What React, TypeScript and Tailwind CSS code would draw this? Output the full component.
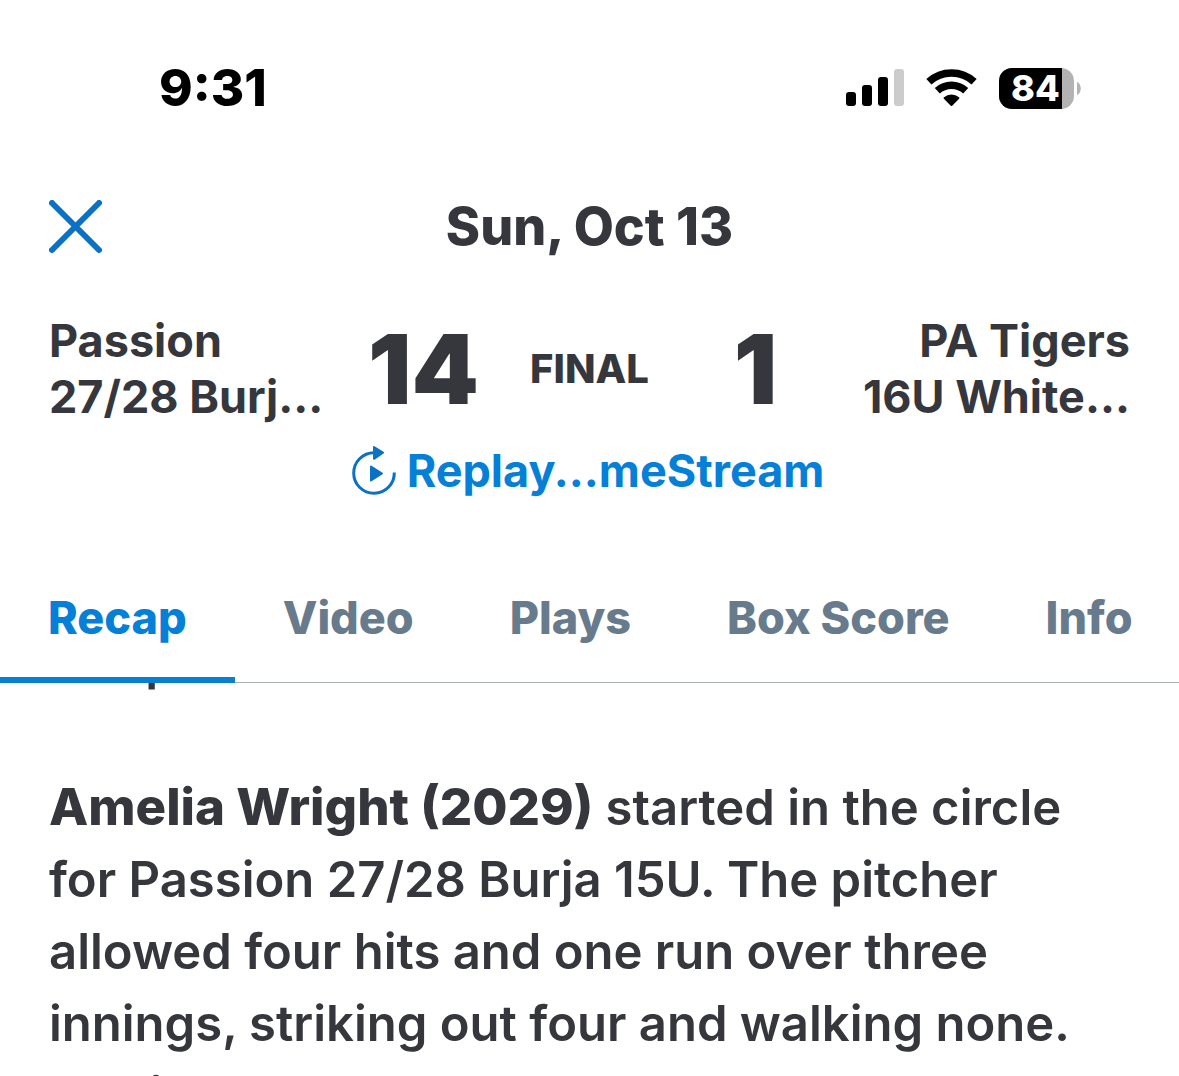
const tabs = ["Recap", "Video", "Plays", "Box Score", "Info"];

function SignalIcon() {
  return (
    <svg width="59" height="38" viewBox="0 0 59 38" fill="currentColor" aria-hidden="true">
      <rect x="1" y="23" width="10" height="14" rx="3" />
      <rect x="17" y="16" width="10" height="21" rx="3" />
      <rect x="33" y="8" width="10" height="29" rx="3" />
      <rect x="49" y="0" width="10" height="37" rx="3" opacity="0.2" />
    </svg>
  );
}

function WifiIcon() {
  return (
    <svg width="51" height="38" viewBox="0 0 51 38" fill="none" stroke="currentColor" aria-hidden="true">
      <path d="M2.9 12.8a33.5 33.5 0 0 1 45.2 0" strokeWidth="7.6" />
      <path d="M11.3 21.8a21 21 0 0 1 28.4 0" strokeWidth="7.4" />
      <path
        d="M18.6 29a11 11 0 0 1 13.8 0L25.5 36Z"
        fill="currentColor"
        strokeWidth="2"
        strokeLinejoin="round"
      />
    </svg>
  );
}

function Battery({ level }: { level: number }) {
  return (
    <div className="flex items-center gap-[3px]">
      <div className="flex h-[41px] w-[75px] overflow-hidden rounded-[13px] bg-[#b3b3b3]">
        <span className="w-[63px] bg-black pl-3 text-[36px] leading-[41px] font-extrabold text-white">
          {level}
        </span>
      </div>
      <svg width="4" height="13" viewBox="0 0 4 13" fill="#b3b3b3" aria-hidden="true">
        <path d="M0 0C5 2 5 11 0 13Z" />
      </svg>
    </div>
  );
}

function StatusBar() {
  return (
    <div className="flex h-[176px] items-center justify-between pr-[98px] pl-[159px] text-black">
      <span className="text-[51px] font-extrabold">9:31</span>
      <div className="flex items-center gap-[22px]">
        <SignalIcon />
        <WifiIcon />
        <Battery level={84} />
      </div>
    </div>
  );
}

function ReplayIcon() {
  return (
    <svg width="46" height="52" viewBox="0 0 46 52" fill="none" className="text-[#0a71c4]" aria-hidden="true">
      <path d="M43.3 27.5A20.3 20.3 0 1 1 23 7.7" stroke="currentColor" strokeWidth="3" />
      <path d="M23 2L32 7.7L23 13.8Z" fill="currentColor" stroke="currentColor" strokeWidth="2" strokeLinejoin="round" />
      <path d="M20 21.5L31 28.5L20 35.5Z" fill="currentColor" stroke="currentColor" strokeWidth="2" strokeLinejoin="round" />
    </svg>
  );
}

function Scoreboard() {
  return (
    <div className="grid grid-cols-[minmax(0,1fr)_140px_192px_140px_minmax(0,1fr)] items-center px-[49px] text-[45px] leading-[56px] font-bold">
      <p className="whitespace-nowrap">
        Passion
        <br />
        27/28 Burj...
      </p>
      <p className="text-center text-[96px] leading-[112px] font-black">14</p>
      <p className="text-center text-[40px] font-extrabold">FINAL</p>
      <p className="text-center text-[96px] leading-[112px] font-black">1</p>
      <p className="text-right whitespace-nowrap">
        PA Tigers
        <br />
        16U White...
      </p>
    </div>
  );
}

export default function App() {
  return (
    <div className="flex h-screen flex-col overflow-hidden bg-white font-['Inter',sans-serif] text-[#35373d]">
      <StatusBar />

      <header className="grid h-[102px] shrink-0 grid-cols-[1fr_auto_1fr] items-center px-[49px]">
        <button aria-label="Close" className="w-[53px] text-[#0a71c4]">
          <svg width="53" height="54" viewBox="0 0 53 54" fill="none" stroke="currentColor" strokeWidth="6" strokeLinecap="round">
            <path d="M3 3L50 50M50 3L3 50" />
          </svg>
        </button>
        <h1 className="text-[52px] font-extrabold">Sun, Oct 13</h1>
      </header>

      <div className="mt-[35px]">
        <Scoreboard />
      </div>

      <a href="#replay" className="mt-[18px] flex items-center justify-center gap-[10px] pr-1 text-[45px] leading-[56px] font-bold text-[#0580d6]">
        <ReplayIcon />
        Replay...meStream
      </a>

      <nav className="mt-[56px] flex h-[128px] shrink-0 justify-between border-b border-[#a9afb5] text-[45px] font-extrabold whitespace-nowrap">
        {tabs.map((tab) => (
          <button
            key={tab}
            className={
              tab === "Recap"
                ? "-mb-px border-b-[6px] border-[#0a7fd2] px-12 pt-1 text-[#0580d6]"
                : "-mb-px border-b-[6px] border-transparent px-12 pt-1 text-[#677b8c]"
            }
          >
            {tab}
          </button>
        ))}
      </nav>

      <main className="min-h-0 flex-1 overflow-hidden">
        {/* scrolled part way down the article */}
        <article className="-mt-[56px] flex flex-col gap-[72px] px-[49px] text-[49px] leading-[72px] font-semibold">
          <p>swept.</p>
          <p>
            <strong className="text-[51px] font-extrabold">Amelia Wright (2029)</strong> started in
            the circle for Passion 27/28 Burja 15U. The pitcher allowed four hits and one run over
            three innings, striking out four and walking none.{" "}
            <strong className="text-[51px] font-extrabold">Maria Gonzalez</strong> started in the
            circle and allowed one run.
          </p>
        </article>
      </main>
    </div>
  );
}
